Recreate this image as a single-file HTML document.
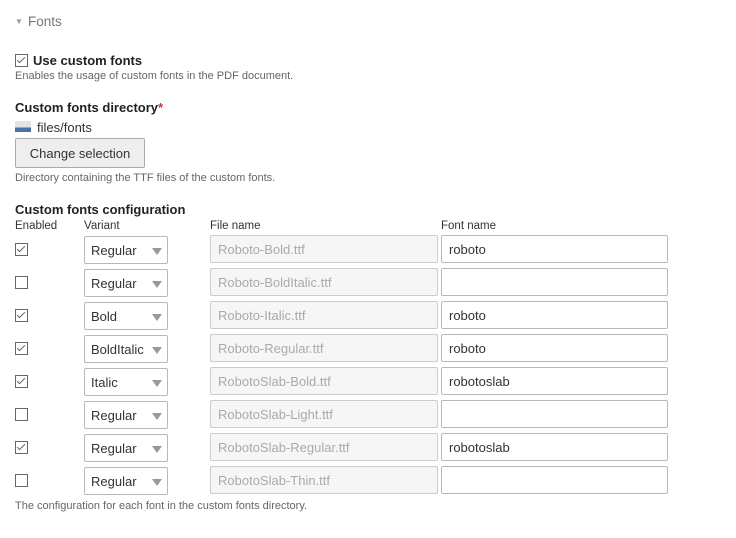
<!DOCTYPE html>
<html><head><style>
body{margin:0;width:736px;height:538px;background:#fff;font-family:"Liberation Sans",sans-serif;color:#222;position:relative;overflow:hidden}
.a{position:absolute;white-space:nowrap}
.d{font-size:11px;color:#666}
.b{font-weight:bold;font-size:12.5px;color:#222}
.h{font-size:11.5px;color:#333}
.cb{position:absolute;width:11px;height:11px;border:1px solid #666;background:#fff}
.cb.c::after{content:"";position:absolute;left:3px;top:0px;width:3px;height:7px;border:solid #666;border-width:0 1.2px 1.2px 0;transform:rotate(45deg)}
.sel{position:absolute;left:84px;width:84px;height:28px;border:1px solid #b8b8b8;border-radius:2px;box-sizing:border-box;font-size:13px;line-height:28px;padding-left:6px;color:#333;background:#fff}
.sel::after{content:"";position:absolute;right:5px;top:11px;border-left:5px solid transparent;border-right:5px solid transparent;border-top:7px solid #999}
.fn{position:absolute;left:210px;width:228px;height:28px;border:1px solid #ccc;border-radius:2px;box-sizing:border-box;background:#f6f6f6;color:#aaa;font-size:13px;line-height:28px;padding-left:7px}
.nm{position:absolute;left:441px;width:227px;height:28px;border:1px solid #b8b8b8;border-radius:2px;box-sizing:border-box;background:#fff;color:#333;font-size:13px;line-height:28px;padding-left:7px}
</style></head><body>
<div class="a" style="left:15px;top:17px;font-size:8px;color:#999">▼</div>
<div class="a" style="left:28px;top:14px;font-size:13.5px;color:#777">Fonts</div>
<div class="cb c" style="left:15px;top:54px"></div>
<div class="a b" style="left:33px;top:53px;font-size:13px">Use custom fonts</div>
<div class="a d" style="left:15px;top:70px">Enables the usage of custom fonts in the PDF document.</div>
<div class="a b" style="left:15px;top:100px;font-size:13px">Custom fonts directory<span style="color:#c33">*</span></div>
<div class="a" style="left:15px;top:121px;width:16px;height:11px;background:linear-gradient(#e4e4e4 0 60%,#4a73a3 60%)"></div>
<div class="a" style="left:37px;top:120px;font-size:13px;color:#333">files/fonts</div>
<div class="a" style="left:15px;top:138px;width:130px;height:30px;border:1px solid #aaa;border-radius:2px;background:#eee;box-sizing:border-box;font-size:13px;line-height:29px;text-align:center;color:#333">Change selection</div>
<div class="a d" style="left:15px;top:172px">Directory containing the TTF files of the custom fonts.</div>
<div class="a b" style="left:15px;top:202px;font-size:13px">Custom fonts configuration</div>
<div class="a h" style="left:15px;top:220px">Enabled</div>
<div class="a h" style="left:84px;top:220px">Variant</div>
<div class="a h" style="left:210px;top:220px">File name</div>
<div class="a h" style="left:441px;top:220px">Font name</div>

<div class="cb c" style="left:15px;top:243px"></div><div class="sel" style="top:236px">Regular</div><div class="fn" style="top:235px">Roboto-Bold.ttf</div><div class="nm" style="top:235px">roboto</div>
<div class="cb" style="left:15px;top:276px"></div><div class="sel" style="top:269px">Regular</div><div class="fn" style="top:268px">Roboto-BoldItalic.ttf</div><div class="nm" style="top:268px"></div>
<div class="cb c" style="left:15px;top:309px"></div><div class="sel" style="top:302px">Bold</div><div class="fn" style="top:301px">Roboto-Italic.ttf</div><div class="nm" style="top:301px">roboto</div>
<div class="cb c" style="left:15px;top:342px"></div><div class="sel" style="top:335px">BoldItalic</div><div class="fn" style="top:334px">Roboto-Regular.ttf</div><div class="nm" style="top:334px">roboto</div>
<div class="cb c" style="left:15px;top:375px"></div><div class="sel" style="top:368px">Italic</div><div class="fn" style="top:367px">RobotoSlab-Bold.ttf</div><div class="nm" style="top:367px">robotoslab</div>
<div class="cb" style="left:15px;top:408px"></div><div class="sel" style="top:401px">Regular</div><div class="fn" style="top:400px">RobotoSlab-Light.ttf</div><div class="nm" style="top:400px"></div>
<div class="cb c" style="left:15px;top:441px"></div><div class="sel" style="top:434px">Regular</div><div class="fn" style="top:433px">RobotoSlab-Regular.ttf</div><div class="nm" style="top:433px">robotoslab</div>
<div class="cb" style="left:15px;top:474px"></div><div class="sel" style="top:467px">Regular</div><div class="fn" style="top:466px">RobotoSlab-Thin.ttf</div><div class="nm" style="top:466px"></div>
<div class="a d" style="left:15px;top:500px">The configuration for each font in the custom fonts directory.</div>
</body></html>
